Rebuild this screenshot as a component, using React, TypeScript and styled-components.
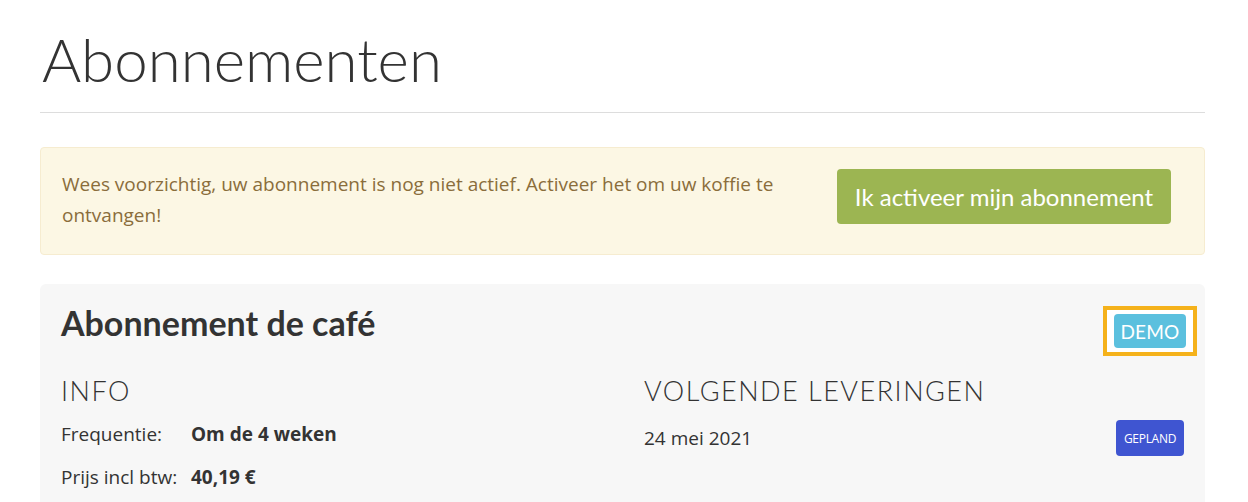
import React from 'react';
import styled, { createGlobalStyle } from 'styled-components';

const GlobalStyle = createGlobalStyle`
  html, body {
    margin: 0;
    padding: 0;
    background: #ffffff;
  }
  body {
    font-family: 'Open Sans', 'Liberation Sans', sans-serif;
    color: #333333;
  }
`;

const Page = styled.div`
  padding: 0 43px 0 40px;
`;

const PageTitle = styled.h1`
  font-family: 'Lato', 'Open Sans', sans-serif;
  font-weight: 300;
  font-size: 60px;
  line-height: 60px;
  color: #333333;
  margin: 0;
  padding: 29px 0 23px 2px;
`;

const Divider = styled.hr`
  border: 0;
  border-top: 1px solid #dddddd;
  margin: 0 0 34px;
`;

const Alert = styled.div`
  display: flex;
  align-items: flex-start;
  justify-content: space-between;
  gap: 40px;
  background: #fcf7e4;
  border: 1px solid #f6ecd0;
  border-radius: 4px;
  padding: 21px 33px 23px 21px;
  margin-bottom: 29px;
`;

const AlertText = styled.p`
  margin: 0;
  font-size: 19px;
  line-height: 31px;
  color: #8a6d3b;
  max-width: 740px;
`;

const ActivateButton = styled.button`
  flex-shrink: 0;
  background: #9cb552;
  color: #ffffff;
  border: 0;
  border-radius: 4px;
  width: 334px;
  height: 55px;
  font-family: 'Lato', 'Open Sans', sans-serif;
  font-size: 24px;
  font-weight: 400;
  cursor: pointer;
`;

const Card = styled.section`
  background: #f7f7f7;
  border-radius: 6px;
  padding: 19px 21px 30px 21px;
`;

const CardHeader = styled.div`
  display: flex;
  justify-content: space-between;
  align-items: flex-start;
  margin-bottom: 19px;
`;

const CardTitle = styled.h2`
  font-family: 'Lato', 'Open Sans', sans-serif;
  font-weight: 700;
  font-size: 34px;
  line-height: 40px;
  margin: 0;
  color: #333333;
`;

const Highlight = styled.div`
  border: 4px solid #f5b21b;
  background: #ffffff;
  padding: 4px 7px;
  margin: 3px -13px 0 0;
  display: flex;
`;

const Badge = styled.span<{ $tone: 'demo' | 'planned' }>`
  display: inline-flex;
  align-items: center;
  justify-content: center;
  color: #ffffff;
  border-radius: 4px;
  background: ${({ $tone }) => ($tone === 'demo' ? '#5bc0de' : '#3f55d1')};
  font-family: ${({ $tone }) =>
    $tone === 'demo' ? "'Lato', 'Open Sans', sans-serif" : "'Open Sans', sans-serif"};
  font-size: ${({ $tone }) => ($tone === 'demo' ? '19px' : '12px')};
  height: ${({ $tone }) => ($tone === 'demo' ? '34px' : '36px')};
  width: ${({ $tone }) => ($tone === 'demo' ? '72px' : '68px')};
  letter-spacing: ${({ $tone }) => ($tone === 'demo' ? '0.2px' : '-0.3px')};
`;

const Columns = styled.div`
  display: grid;
  grid-template-columns: 1fr 1fr;
  column-gap: 43px;
`;

const SectionTitle = styled.h3`
  font-family: 'Lato', 'Open Sans', sans-serif;
  font-weight: 300;
  font-size: 27px;
  letter-spacing: 1.5px;
  line-height: 32px;
  margin: 0 0 15px;
  color: #333333;
  text-transform: uppercase;
`;

const InfoRow = styled.div`
  display: grid;
  grid-template-columns: 130px 1fr;
  font-size: 19px;
  line-height: 24px;
  margin-bottom: 19px;
`;

const InfoLabel = styled.span`
  color: #333333;
`;

const InfoValue = styled.span`
  font-weight: 700;
  color: #333333;
`;

const DeliveryRow = styled.div`
  display: flex;
  justify-content: space-between;
  align-items: center;
  font-size: 19px;
  margin-top: -2px;
`;

export default function App() {
  return (
    <>
      <GlobalStyle />
      <Page>
        <PageTitle>Abonnementen</PageTitle>
        <Divider />

        <Alert>
          <AlertText>
            Wees voorzichtig, uw abonnement is nog niet actief. Activeer het om uw koffie te ontvangen!
          </AlertText>
          <ActivateButton>Ik activeer mijn abonnement</ActivateButton>
        </Alert>

        <Card>
          <CardHeader>
            <CardTitle>Abonnement de café</CardTitle>
            <Highlight>
              <Badge $tone="demo">DEMO</Badge>
            </Highlight>
          </CardHeader>

          <Columns>
            <div>
              <SectionTitle>Info</SectionTitle>
              <InfoRow>
                <InfoLabel>Frequentie:</InfoLabel>
                <InfoValue>Om de 4 weken</InfoValue>
              </InfoRow>
              <InfoRow>
                <InfoLabel>Prijs incl btw:</InfoLabel>
                <InfoValue>40,19 €</InfoValue>
              </InfoRow>
            </div>
            <div>
              <SectionTitle>Volgende leveringen</SectionTitle>
              <DeliveryRow>
                <span>24 mei 2021</span>
                <Badge $tone="planned">GEPLAND</Badge>
              </DeliveryRow>
            </div>
          </Columns>
        </Card>
      </Page>
    </>
  );
}
